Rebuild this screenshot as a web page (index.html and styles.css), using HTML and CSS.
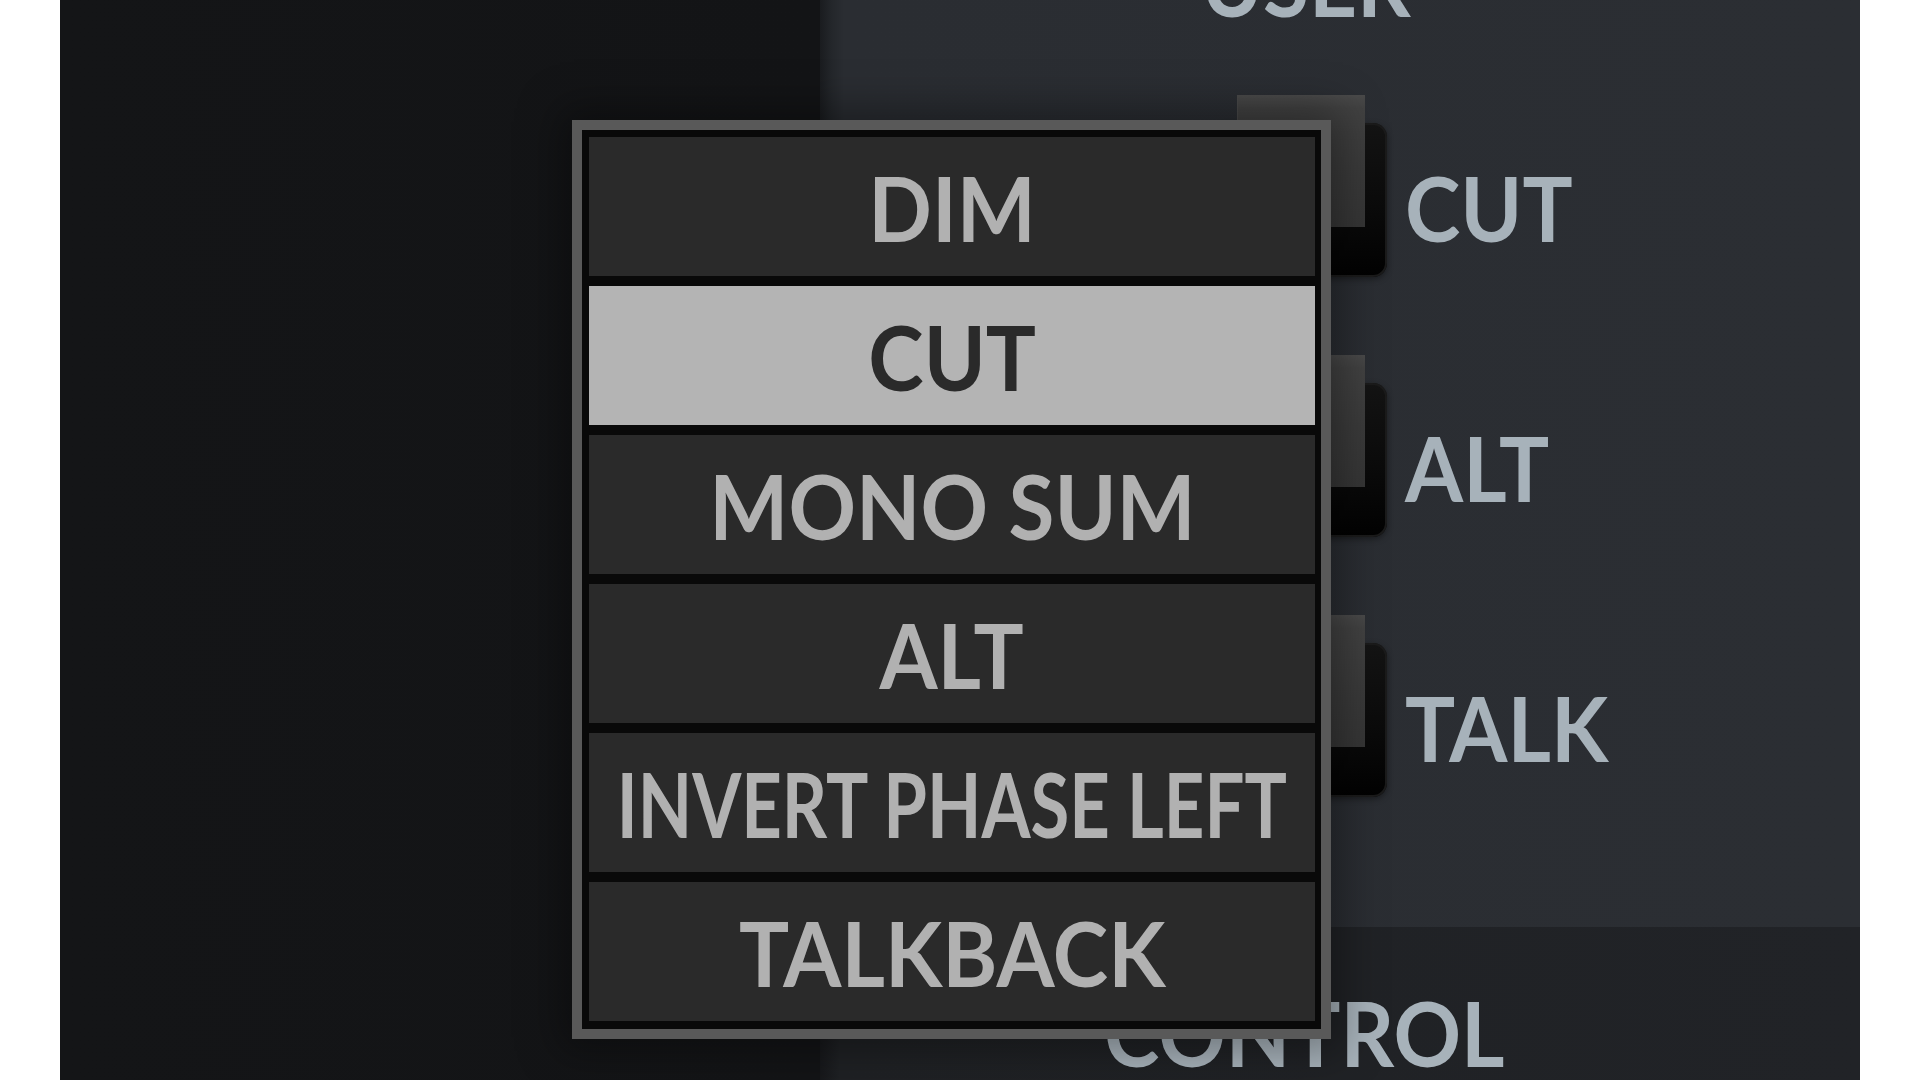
FILE: index.html
```html
<!DOCTYPE html>
<html lang="en">
<head>
<meta charset="utf-8">
<title>Monitor controller</title>
<link rel="stylesheet" href="styles.css">
</head>
<body>
<div class="app">
  <div class="left-pane"></div>
  <div class="right-pane">
    <section class="user-section">
      <div class="col">
        <div class="col-title user-title"><span class="sq">USER</span></div>
        <div class="switch-row">
          <div class="switch"><div class="switch-body"></div><div class="switch-cap"></div></div>
          <div class="switch-label"><span class="sq-left">CUT</span></div>
        </div>
        <div class="switch-row">
          <div class="switch"><div class="switch-body"></div><div class="switch-cap"></div></div>
          <div class="switch-label"><span class="sq-left">ALT</span></div>
        </div>
        <div class="switch-row">
          <div class="switch"><div class="switch-body"></div><div class="switch-cap"></div></div>
          <div class="switch-label"><span class="sq-left">TALK</span></div>
        </div>
      </div>
    </section>
    <section class="control-section">
      <div class="col">
        <div class="col-title control-title"><span class="sq">CONTROL</span></div>
      </div>
    </section>
  </div>
  <div class="menu">
    <div class="menu-item"><span class="sq">DIM</span></div>
    <div class="menu-item selected"><span class="sq">CUT</span></div>
    <div class="menu-item"><span class="sq">MONO SUM</span></div>
    <div class="menu-item"><span class="sq">ALT</span></div>
    <div class="menu-item"><span class="sq fit">INVERT PHASE LEFT</span></div>
    <div class="menu-item"><span class="sq">TALKBACK</span></div>
  </div>
</div>
</body>
</html>
```

FILE: styles.css
```css
html, body {
  margin: 0;
  padding: 0;
  background: #ffffff;
}

body {
  font-family: "Lato", "Liberation Sans", sans-serif;
  font-weight: 700;
  overflow: hidden;
}

.app {
  position: relative;
  margin: 0 60px;
  height: 1080px;
  display: grid;
  grid-template-columns: 760px 1040px;
}

.left-pane {
  background: linear-gradient(to right, #141517 0%, #131416 100%);
}

.right-pane {
  display: flex;
  flex-direction: column;
}

.user-section {
  height: 927px;
  background: linear-gradient(to right, #1a1c1f 0px, #24272b 12px, #2a2d32 24px, #2b2e33 100%);
}

.control-section {
  flex: 1;
  background: linear-gradient(to right, #17181b 0px, #1f2124 20px, #212327 100%);
}

.col {
  margin-left: 395px;
  display: flex;
  flex-direction: column;
}

.col-title {
  width: 172px;
  display: flex;
  justify-content: center;
  font-size: 90px;
  line-height: 90px;
  color: #a7b2ba;
  white-space: nowrap;
}

.user-title {
  margin-top: -63px;
  padding-left: 10px;
  box-sizing: border-box;
}

.control-title {
  margin-top: 60px;
  padding-left: 6px;
  box-sizing: border-box;
}

.sq {
  display: inline-block;
  transform: scaleX(0.93);
  transform-origin: center;
  white-space: nowrap;
}

.sq.fit {
  transform: scaleX(0.785);
}

.sq-left {
  display: inline-block;
  transform: scaleX(0.93);
  transform-origin: left center;
  white-space: nowrap;
}

.switch-row {
  display: flex;
  align-items: flex-start;
  margin-top: 78px;
}

.user-title + .switch-row {
  margin-top: 68px;
}

.switch {
  width: 172px;
  height: 182px;
  display: grid;
}

.switch-body {
  grid-area: 1 / 1;
  margin-top: 28px;
  border-radius: 14px;
  background: linear-gradient(to bottom, #141414 0%, #0b0b0b 55%, #020202 100%);
  box-shadow: inset 0 0 0 2px #1b1b1b, 0 2px 6px rgba(0, 0, 0, 0.4);
}

.switch-cap {
  grid-area: 1 / 1;
  margin: 0 22px 50px 22px;
  background: linear-gradient(to bottom, #4a4a4a 0%, #424242 10%, #3b3b3b 55%, #363636 100%);
  box-shadow: inset 1px 0 0 #4a4a4a;
}

.switch-label {
  margin-left: 18px;
  margin-top: 67px;
  font-size: 90px;
  line-height: 90px;
  color: #a7b2ba;
  white-space: nowrap;
}

.menu {
  position: absolute;
  left: 512px;
  top: 120px;
  width: 759px;
  box-sizing: border-box;
  border: 10px solid #595959;
  padding: 7px 6px 8px 7px;
  background: #090909;
  display: flex;
  flex-direction: column;
  gap: 10px;
  box-shadow: 0 0 40px 12px rgba(0, 0, 0, 0.35);
}

.menu-item {
  height: 139px;
  background: #2a2a2a;
  display: flex;
  align-items: center;
  justify-content: center;
  font-size: 90px;
  line-height: 90px;
  color: #b1b1b1;
}

.menu-item.selected {
  background: #b4b4b4;
  color: #2a2a2a;
}
```
